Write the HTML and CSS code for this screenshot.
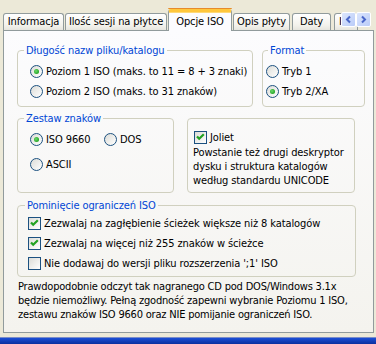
FILE: index.html
```html
<!DOCTYPE html>
<html lang="pl">
<head>
    <meta charset="UTF-8">
    <title>Opcje ISO</title>
    <link rel="stylesheet" href="styles.css">
</head>
<body>
    <div class="dialog">

        <!-- Tab strip -->
        <div class="tabs">
            <div class="tab tab-info">Informacja</div>
            <div class="tab tab-sessions">Ilość sesji na płytce</div>
            <div class="tab tab-iso active">Opcje ISO</div>
            <div class="tab tab-desc">Opis płyty</div>
            <div class="tab tab-dates">Daty</div>
            <div class="tab tab-more">I</div>
            <div class="scroller">
                <span class="spin">
                    <svg width="9" height="9" viewBox="0 0 9 9"><path d="M6 1.5 L3 4.5 L6 7.5" fill="none" stroke="#4A67C9" stroke-width="2"/></svg>
                </span>
                <span class="spin">
                    <svg width="9" height="9" viewBox="0 0 9 9"><path d="M3 1.5 L6 4.5 L3 7.5" fill="none" stroke="#4A67C9" stroke-width="2"/></svg>
                </span>
            </div>
        </div>

        <!-- Tab page -->
        <div class="panel">
            <div class="row row-top">
                <fieldset class="group group-names">
                    <legend>Długość nazw pliku/katalogu</legend>
                    <label class="opt"><span class="radio on"></span>Poziom 1 ISO (maks. to 11 = 8 + 3 znaki)</label>
                    <label class="opt"><span class="radio"></span>Poziom 2 ISO (maks. to 31 znaków)</label>
                </fieldset>
                <fieldset class="group group-format">
                    <legend>Format</legend>
                    <label class="opt"><span class="radio"></span>Tryb 1</label>
                    <label class="opt"><span class="radio on"></span>Tryb 2/XA</label>
                </fieldset>
            </div>

            <div class="row row-mid">
                <fieldset class="group group-charset">
                    <legend>Zestaw znaków</legend>
                    <div class="opt-line">
                        <label class="opt opt-iso"><span class="radio on"></span>ISO 9660</label>
                        <label class="opt"><span class="radio"></span>DOS</label>
                    </div>
                    <label class="opt opt-ascii"><span class="radio"></span>ASCII</label>
                </fieldset>
                <fieldset class="group group-joliet">
                    <label class="opt opt-joliet">
                        <span class="check">
                            <svg width="11" height="11" viewBox="0 0 11 11"><path d="M2 4.5 L4.2 6.8 L8.8 2.2" fill="none" stroke="#21A121" stroke-width="2.2"/></svg>
                        </span>Joliet
                    </label>
                    <p class="hint">Powstanie też drugi deskryptor<br>dysku i struktura katalogów<br>według standardu UNICODE</p>
                </fieldset>
            </div>

            <fieldset class="group group-limits">
                <legend>Pominięcie ograniczeń ISO</legend>
                <label class="opt">
                    <span class="check">
                        <svg width="11" height="11" viewBox="0 0 11 11"><path d="M2 4.5 L4.2 6.8 L8.8 2.2" fill="none" stroke="#21A121" stroke-width="2.2"/></svg>
                    </span>Zezwalaj na zagłębienie ścieżek większe niż 8 katalogów
                </label>
                <label class="opt">
                    <span class="check">
                        <svg width="11" height="11" viewBox="0 0 11 11"><path d="M2 4.5 L4.2 6.8 L8.8 2.2" fill="none" stroke="#21A121" stroke-width="2.2"/></svg>
                    </span>Zezwalaj na więcej niż 255 znaków w ścieżce
                </label>
                <label class="opt"><span class="check"></span>Nie dodawaj do wersji pliku rozszerzenia ';1' ISO</label>
            </fieldset>

            <p class="note">Prawdopodobnie odczyt tak nagranego CD pod DOS/Windows 3.1x<br>będzie niemożliwy. Pełną zgodność zapewni wybranie Poziomu 1 ISO,<br>zestawu znaków ISO 9660 oraz NIE pomijanie ograniczeń ISO.</p>
        </div>

        <div class="frame"></div>
    </div>
</body>
</html>
```

FILE: styles.css
```css
/* General */
* {
    box-sizing: border-box;
}

body {
    margin: 0;
    background-color: #ECE9D8;
    font-family: "DejaVu Sans Condensed", "Liberation Sans", sans-serif;
    font-size: 11px;
    letter-spacing: -0.1px;
    color: #000;
}

.dialog {
    width: 376px;
    height: 344px;
    display: flex;
    flex-direction: column;
    overflow: hidden;
}

/* Tabs */
.tabs {
    position: relative;
    display: flex;
    align-items: flex-end;
    gap: 1px;
    height: 30px;
    padding-left: 3px;
    z-index: 1;
}

.tab {
    height: 17px;
    line-height: 16px;
    text-align: center;
    white-space: nowrap;
    border: 1px solid #919B9C;
    border-bottom: none;
    border-radius: 3px 3px 0 0;
    background: linear-gradient(#FFFFFF, #F3F2EC 70%, #E6E5DE);
}

.tab-info { width: 61px; }
.tab-sessions { width: 102px; }
.tab-iso { width: 64px; }
.tab-desc { width: 57px; }
.tab-dates { width: 39px; margin-left: 1px; }
.tab-more { width: 24px; margin-left: 2px; text-align: left; padding-left: 4px; }

.tab.active {
    height: 22px;
    margin-bottom: -1px;
    padding-top: 2px;
    line-height: 16px;
    background: #FCFCFE;
    border-top: 3px solid #FFC73C;
    box-shadow: inset 0 1px 0 #FFD976;
    position: relative;
}

.tab.active::before {
    content: "";
    position: absolute;
    left: -1px;
    right: -1px;
    top: -4px;
    height: 1px;
    background: #E68B2C;
    border-radius: 2px 2px 0 0;
}

.scroller {
    position: absolute;
    right: 5px;
    top: 12px;
    display: flex;
}

.spin {
    width: 15px;
    height: 15px;
    display: flex;
    align-items: center;
    justify-content: center;
    border: 1px solid #FFFFFF;
    border-radius: 2px;
    background: linear-gradient(135deg, #DCE6FD, #BACCF8);
}

/* Tab page */
.panel {
    height: 303px;
    margin: 0 2px 0 3px;
    padding: 13px 0 0 13px;
    border: 1px solid #919B9C;
    background: linear-gradient(#FCFCFE, #F4F3EE);
}

.row {
    display: flex;
    align-items: stretch;
}

.row-top { gap: 9px; }
.row-mid { gap: 13px; margin-top: 5px; }

/* Group boxes */
.group {
    margin: 0;
    min-width: 0;
    padding: 0;
    border: 1px solid #D0D0BF;
    border-radius: 4px;
}

.group legend {
    margin-left: 6px;
    padding: 0 2px;
    line-height: 13px;
    color: #0046D5;
}

.group-names { width: 236px; padding: 4px 0 5px 0; }
.group-format { width: 103px; padding: 4px 0 5px 0; }
.group-format legend { margin-left: 5px; }
.group-charset { width: 157px; padding: 4px 0 18px 0; }
.group-joliet { width: 168px; margin-top: 6px; padding: 9px 0 4px 5px; }
.group-limits { width: 339px; margin-top: 6px; padding: 1px 0 3px 0; }

.group-names .opt,
.group-charset .opt-line,
.group-charset .opt-ascii { margin-left: 12px; }
.group-format .opt { margin-left: 3px; }
.group-limits .opt { margin-left: 10px; }
.group-limits legend { margin-left: 7px; }

/* Options */
.opt {
    display: flex;
    align-items: center;
    gap: 3px;
    height: 20px;
    white-space: nowrap;
}

.opt-line {
    display: flex;
}

.opt-line .opt { margin-left: 0; }
.opt-iso { width: 74px; }
.opt-ascii { margin-top: 5px; }
.opt-joliet { height: 18px; margin-left: 1px; }

.radio {
    position: relative;
    flex: none;
    width: 13px;
    height: 13px;
    border: 1px solid #1C5180;
    border-radius: 50%;
    background: linear-gradient(135deg, #DCDCD7, #FFFFFF);
}

.radio.on::after {
    content: "";
    position: absolute;
    left: 3px;
    top: 3px;
    width: 5px;
    height: 5px;
    border-radius: 50%;
    background: radial-gradient(circle at 40% 40%, #6BDA6B, #21A121 75%);
}

.check {
    flex: none;
    display: flex;
    align-items: center;
    justify-content: center;
    width: 13px;
    height: 13px;
    border: 1px solid #1C5180;
    background: linear-gradient(135deg, #DCDCD7, #FFFFFF);
}

.hint {
    margin: 0;
    line-height: 14px;
    white-space: nowrap;
}

.note {
    margin: 3px 0 0 1px;
    line-height: 14px;
    letter-spacing: -0.2px;
    white-space: nowrap;
}

/* Window frame below the page */
.frame {
    height: 7px;
    margin-top: 4px;
    border-top: 1px solid #7A8CC8;
    background: linear-gradient(#1B4FD6, #0B2F9E);
}
```
